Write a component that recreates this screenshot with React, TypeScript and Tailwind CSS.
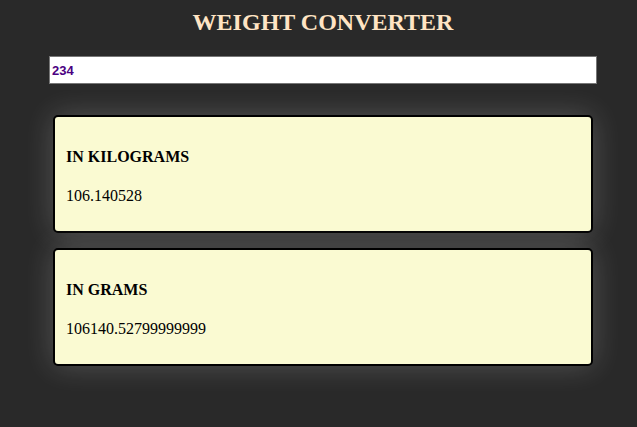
import React, { useState } from "react";

const POUND_TO_KG = 0.453592;

const toGrams = (lb: number) => (lb * POUND_TO_KG * 1000 - 1e-11).toString();

export default function App() {
  const [pounds, setPounds] = useState("234");

  const value = parseFloat(pounds);
  const kg = isNaN(value) ? "" : String(value * POUND_TO_KG);
  const grams = isNaN(value) ? "" : toGrams(value);

  const results = [
    { label: "IN KILOGRAMS", value: kg },
    { label: "IN GRAMS", value: grams },
  ];

  return (
    <div className="min-h-[427px] bg-[#292929] font-['Liberation_Serif',serif]">
      {/* Title */}
      <h1 className="pt-[8px] pl-[9px] text-center text-[24px] leading-[28px] font-bold text-[#ffe4c4]">
        WEIGHT CONVERTER
      </h1>

      {/* Pounds input */}
      <div className="mt-[20px] pl-[49px]">
        <input
          type="text"
          value={pounds}
          onChange={(e) => setPounds(e.target.value)}
          className="block h-[28px] w-[548px] border border-[#767676] bg-white px-[2px] font-['Liberation_Sans',Arial,sans-serif] text-[13px] font-bold text-[#4b0082] outline-none"
        />
      </div>

      {/* Results */}
      <div className="mt-[31px] flex flex-col gap-[15px] pl-[53px]">
        {results.map((r) => (
          <div
            key={r.label}
            className="w-[540px] rounded-[5px] border-2 border-black bg-[#fafad2] px-[11px] pt-[31px] pb-[26px] text-black shadow-[0_0_30px_rgba(255,255,255,0.2)]"
          >
            <h4 className="text-[16px] leading-[18px] font-bold">{r.label}</h4>
            <p className="mt-[21px] text-[16px] leading-[18px]">{r.value}</p>
          </div>
        ))}
      </div>
    </div>
  );
}
